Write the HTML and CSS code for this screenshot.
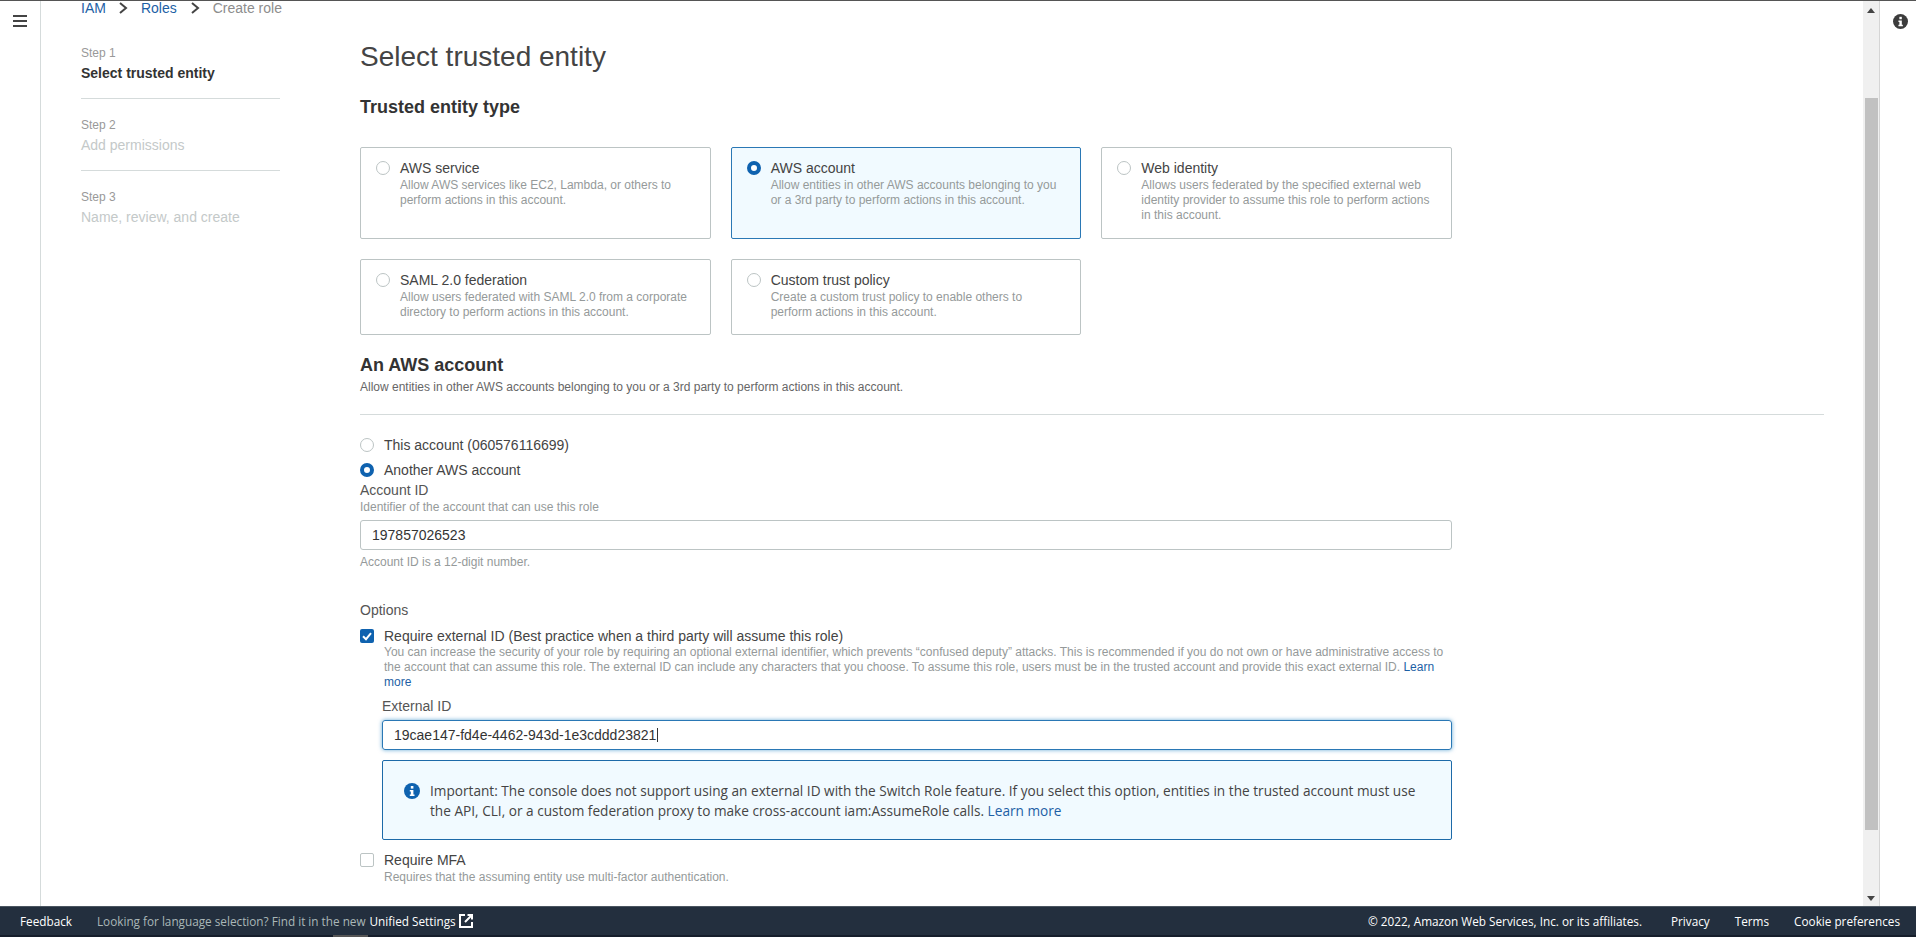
FILE: index.html
```html
<!DOCTYPE html>
<html lang="en">
<head>
    <meta charset="UTF-8">
    <meta name="viewport" content="width=device-width, initial-scale=1.0">
    <title>Create role</title>
    <link rel="stylesheet" href="styles.css">
</head>
<body>
    <div class="app">
        <div class="rail">
            <svg class="menu-icon" width="14" height="12" viewBox="0 0 14 12"><path d="M0 1h14M0 6h14M0 11h14" stroke="#444" stroke-width="2"/></svg>
        </div>

        <div class="main">
            <div class="crumbs">
                <a href="#">IAM</a>
                <svg class="crumb-sep" width="10" height="12" viewBox="0 0 10 12"><path d="M2 1l6 5-6 5" fill="none" stroke="#444" stroke-width="2"/></svg>
                <a href="#">Roles</a>
                <svg class="crumb-sep" width="10" height="12" viewBox="0 0 10 12"><path d="M2 1l6 5-6 5" fill="none" stroke="#444" stroke-width="2"/></svg>
                <span class="crumb-now">Create role</span>
            </div>

            <div class="wizard">
                <div class="steps">
                    <div class="step">
                        <div class="step-no">Step 1</div>
                        <div class="step-name active">Select trusted entity</div>
                    </div>
                    <div class="step">
                        <div class="step-no">Step 2</div>
                        <div class="step-name">Add permissions</div>
                    </div>
                    <div class="step last">
                        <div class="step-no">Step 3</div>
                        <div class="step-name">Name, review, and create</div>
                    </div>
                </div>

                <div class="form">
                    <h1>Select trusted entity</h1>
                    <h2 class="type-title">Trusted entity type</h2>

                    <div class="cards">
                        <div class="card">
                            <span class="radio"></span>
                            <div>
                                <div class="card-title">AWS service</div>
                                <div class="card-desc">Allow AWS services like EC2, Lambda, or others to perform actions in this account.</div>
                            </div>
                        </div>
                        <div class="card selected">
                            <span class="radio on"></span>
                            <div>
                                <div class="card-title">AWS account</div>
                                <div class="card-desc">Allow entities in other AWS accounts belonging to you or a 3rd party to perform actions in this account.</div>
                            </div>
                        </div>
                        <div class="card">
                            <span class="radio"></span>
                            <div>
                                <div class="card-title">Web identity</div>
                                <div class="card-desc">Allows users federated by the specified external web identity provider to assume this role to perform actions in this account.</div>
                            </div>
                        </div>
                        <div class="card">
                            <span class="radio"></span>
                            <div>
                                <div class="card-title">SAML 2.0 federation</div>
                                <div class="card-desc">Allow users federated with SAML 2.0 from a corporate directory to perform actions in this account.</div>
                            </div>
                        </div>
                        <div class="card">
                            <span class="radio"></span>
                            <div>
                                <div class="card-title">Custom trust policy</div>
                                <div class="card-desc">Create a custom trust policy to enable others to perform actions in this account.</div>
                            </div>
                        </div>
                    </div>

                    <h2 class="section-title">An AWS account</h2>
                    <p class="section-desc">Allow entities in other AWS accounts belonging to you or a 3rd party to perform actions in this account.</p>
                    <div class="divider"></div>

                    <div class="choice first-choice"><span class="radio"></span>This account (060576116699)</div>
                    <div class="choice second-choice"><span class="radio on"></span>Another AWS account</div>

                    <div class="label">Account ID</div>
                    <div class="hint">Identifier of the account that can use this role</div>
                    <div class="field account-field">197857026523</div>
                    <div class="helper">Account ID is a 12-digit number.</div>

                    <div class="label options-label">Options</div>
                    <div class="check-row external-row">
                        <span class="checkbox on">
                            <svg width="14" height="14" viewBox="0 0 14 14"><path d="M3 7.2l3 3 5-6" fill="none" stroke="#fff" stroke-width="2"/></svg>
                        </span>
                        Require external ID (Best practice when a third party will assume this role)
                    </div>
                    <div class="check-desc">You can increase the security of your role by requiring an optional external identifier, which prevents “confused deputy” attacks. This is recommended if you do not own or have administrative access to the account that can assume this role. The external ID can include any characters that you choose. To assume this role, users must be in the trusted account and provide this exact external ID. <a href="#">Learn more</a></div>

                    <div class="nested">
                        <div class="label external-label">External ID</div>
                        <div class="field focused">19cae147-fd4e-4462-943d-1e3cddd23821<span class="caret"></span></div>
                        <div class="alert">
                            <svg class="alert-icon" width="16" height="16" viewBox="0 0 16 16"><circle cx="8" cy="8" r="8" fill="#0f62af"/><rect x="6.8" y="3" width="2.6" height="2.6" fill="#fff"/><path d="M5.8 7h3.6v4.4h1.1V13H5.8v-1.6h1V8.6h-1z" fill="#fff"/></svg>
                            <div>Important: The console does not support using an external ID with the Switch Role feature. If you select this option, entities in the trusted account must use the API, CLI, or a custom federation proxy to make cross-account iam:AssumeRole calls. <a href="#">Learn more</a></div>
                        </div>
                    </div>

                    <div class="check-row mfa-row"><span class="checkbox"></span>Require MFA</div>
                    <div class="mfa-desc">Requires that the assuming entity use multi-factor authentication.</div>
                </div>
            </div>
        </div>

        <div class="scrollbar">
            <svg class="arrow-up" width="8" height="5" viewBox="0 0 8 5"><path d="M4 0l4 5H0z" fill="#444"/></svg>
            <div class="thumb"></div>
            <svg class="arrow-down" width="8" height="5" viewBox="0 0 8 5"><path d="M0 0h8L4 5z" fill="#444"/></svg>
        </div>

        <div class="tools">
            <svg width="15" height="15" viewBox="0 0 16 16"><circle cx="8" cy="8" r="8" fill="#3c3c3c"/><rect x="6.8" y="3" width="2.6" height="2.6" fill="#fff"/><path d="M5.8 7h3.6v4.4h1.1V13H5.8v-1.6h1V8.6h-1z" fill="#fff"/></svg>
        </div>
    </div>

    <div class="footer">
        <a class="foot-link feedback" href="#">Feedback</a>
        <span class="foot-note">Looking for language selection? Find it in the new</span>
        <a class="foot-link unified" href="#">Unified Settings</a>
        <svg class="ext-icon" width="14" height="14" viewBox="0 0 14 14"><path d="M6 1H1v12h12V8" fill="none" stroke="#fff" stroke-width="2"/><path d="M13 1L6 8M8.5 1H13v4.5" fill="none" stroke="#fff" stroke-width="2"/></svg>
        <div class="foot-right">
            <span class="copyright">© 2022, Amazon Web Services, Inc. or its affiliates.</span>
            <a class="foot-link" href="#">Privacy</a>
            <a class="foot-link" href="#">Terms</a>
            <a class="foot-link" href="#">Cookie preferences</a>
        </div>
        <div class="page-thumb"></div>
    </div>
</body>
</html>
```

FILE: styles.css
```css
* {
    box-sizing: border-box;
}

html, body {
    height: 100%;
}

body {
    margin: 0;
    overflow: hidden;
    display: flex;
    flex-direction: column;
    border-top: 1px solid #555;
    font-family: "Liberation Sans", Arial, sans-serif;
    font-size: 14px;
    color: #444;
    background: #fff;
}

a {
    text-decoration: none;
    color: #1d5fa5;
}

.app {
    flex: 1;
    display: flex;
    min-height: 0;
}

.rail {
    width: 41px;
    flex: none;
    border-right: 1px solid #d5dbdb;
    padding: 14px 0 0 13px;
}

.menu-icon {
    display: block;
}

.main {
    flex: 1;
    min-width: 0;
    padding-left: 40px;
    overflow: hidden;
}

.crumbs {
    height: 14px;
    line-height: 14px;
    display: flex;
    align-items: center;
}

.crumbs a:first-child {
    margin-right: -1px;
}

.crumb-sep {
    margin: 0 13px;
}

.crumb-now {
    color: #8d8d8d;
}

.wizard {
    display: flex;
}

/* left steps */
.steps {
    width: 199px;
    flex: none;
    margin-right: 80px;
    padding-top: 30px;
}

.step {
    padding-bottom: 17px;
    margin-bottom: 18px;
    border-bottom: 1px solid #d5dbdb;
}

.step.last {
    border-bottom: 0;
}

.step-no {
    font-size: 12px;
    line-height: 16px;
    color: #999;
}

.step-name {
    margin-top: 4px;
    line-height: 16px;
    color: #c4c9c9;
}

.step-name.active {
    font-weight: bold;
    color: #333;
}

/* form */
.form {
    flex: 1;
    min-width: 0;
    padding: 24px 39px 0 0;
}

h1 {
    margin: 0;
    font-size: 28px;
    font-weight: normal;
    line-height: 36px;
    color: #444;
}

h2 {
    margin: 0;
    font-size: 18px;
    font-weight: bold;
    line-height: 24px;
    color: #333;
}

.type-title {
    margin-top: 20px;
}

.cards {
    margin-top: 28px;
    width: 1092px;
    display: grid;
    grid-template-columns: repeat(3, 1fr);
    grid-template-rows: 92px 76px;
    gap: 20px;
}

.card {
    display: flex;
    gap: 10px;
    padding: 11px 15px 0;
    border: 1px solid #bcc4c4;
    border-radius: 2px;
}

.card.selected {
    background: #f1faff;
    border-color: #2a78b5;
}

.card-title {
    line-height: 19px;
    color: #444;
}

.card-desc {
    font-size: 12px;
    line-height: 15px;
    color: #959a9a;
}

.radio {
    width: 14px;
    height: 14px;
    flex: none;
    margin-top: 2px;
    border: 1px solid #bcc4c4;
    border-radius: 50%;
    background: #fff;
}

.radio.on {
    border: 4px solid #0f62af;
}

.section-title {
    margin-top: 18px;
}

.section-desc {
    margin: 2px 0 0;
    font-size: 12px;
    line-height: 16px;
    color: #666;
}

.divider {
    margin-top: 19px;
    height: 1px;
    background: #d5dbdb;
}

.choice {
    display: flex;
    gap: 10px;
    line-height: 20px;
    color: #444;
}

.choice .radio {
    margin-top: 3px;
}

.first-choice {
    margin-top: 20px;
}

.second-choice {
    margin-top: 5px;
}

.label {
    line-height: 20px;
    color: #555;
}

.hint {
    font-size: 12px;
    line-height: 14px;
    color: #959a9a;
}

.field {
    height: 30px;
    width: 1092px;
    padding-left: 11px;
    line-height: 28px;
    border: 1px solid #bcc4c4;
    border-radius: 3px;
    color: #333;
}

.account-field {
    margin-top: 6px;
}

.helper {
    margin-top: 4px;
    font-size: 12px;
    line-height: 16px;
    color: #959a9a;
}

.options-label {
    margin-top: 30px;
}

.check-row {
    display: flex;
    align-items: center;
    gap: 10px;
    line-height: 18px;
    color: #444;
}

.checkbox {
    width: 14px;
    height: 14px;
    flex: none;
    border: 1px solid #bcc4c4;
    border-radius: 2px;
    background: #fff;
}

.checkbox.on {
    border: 0;
    background: #0f62af;
}

.checkbox svg {
    display: block;
}

.external-row {
    margin-top: 7px;
}

.check-desc {
    width: 1092px;
    padding-left: 24px;
    font-size: 12px;
    line-height: 15px;
    color: #959a9a;
}

.nested {
    width: 1092px;
    padding-left: 22px;
}

.external-label {
    margin-top: 6px;
}

.nested .field {
    width: 100%;
    margin-top: 4px;
}

.field.focused {
    border-color: #2a78b5;
    box-shadow: 0 0 4px rgba(0, 115, 187, 0.6);
}

.caret {
    display: inline-block;
    width: 1px;
    height: 14px;
    margin-left: 1px;
    vertical-align: -2px;
    background: #333;
}

.alert {
    display: flex;
    gap: 10px;
    height: 80px;
    margin-top: 10px;
    padding: 20px 30px 0 21px;
    border: 1px solid #1d6aa8;
    border-radius: 2px;
    background: #f1faff;
    font-family: "Open Sans", sans-serif;
    font-size: 13.65px;
    line-height: 20px;
    color: #444;
}

.alert-icon {
    flex: none;
    margin-top: 2px;
}

.mfa-row {
    margin-top: 11px;
}

.mfa-desc {
    margin-top: 1px;
    padding-left: 24px;
    font-size: 12px;
    line-height: 14px;
    color: #959a9a;
}

/* page scrollbar and tools */
.scrollbar {
    width: 17px;
    flex: none;
    display: flex;
    flex-direction: column;
    align-items: center;
    background: #f0f0f0;
    border-right: 1px solid #d5d5d5;
}

.arrow-up {
    margin-top: 7px;
}

.thumb {
    width: 13px;
    height: 732px;
    margin-top: 85px;
    background: #c1c1c1;
}

.arrow-down {
    margin-top: 66px;
}

.tools {
    width: 36px;
    flex: none;
    padding: 13px 0 0 13px;
}

/* footer */
.footer {
    position: relative;
    flex: none;
    height: 31px;
    display: flex;
    align-items: center;
    padding: 0 16px 0 20px;
    background: #232f3e;
    border-top: 1px solid #4a5560;
    border-bottom: 2px solid #161e2b;
    font-family: "Open Sans", sans-serif;
    font-size: 11.75px;
}

.foot-link {
    color: #fff;
}

.foot-note {
    margin-left: 25px;
    color: #aab7b8;
}

.unified {
    margin-left: 4px;
}

.ext-icon {
    margin-left: 3px;
}

.foot-right {
    margin-left: auto;
    display: flex;
    gap: 25px;
}

.copyright {
    margin-right: 4px;
    color: #fff;
}

.page-thumb {
    position: absolute;
    left: 333px;
    bottom: -2px;
    width: 35px;
    height: 2px;
    background: #555;
}
```
